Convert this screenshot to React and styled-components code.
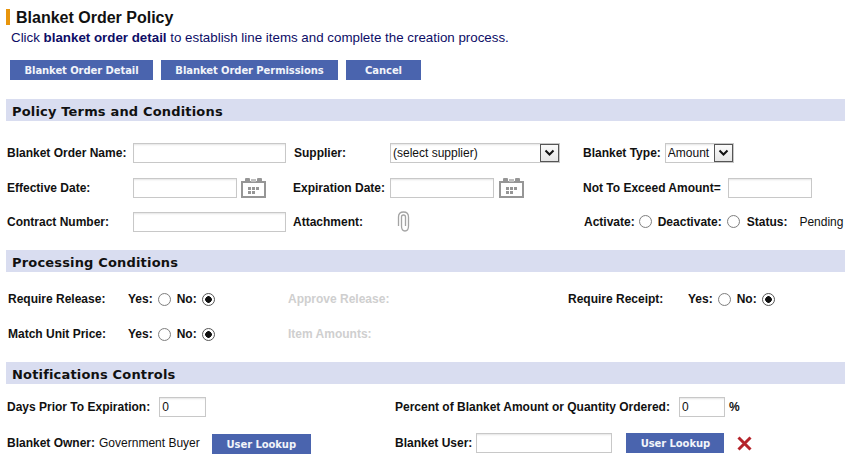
import React from "react";
import styled, { createGlobalStyle } from "styled-components";

const GlobalStyle = createGlobalStyle`
  html, body {
    margin: 0;
    padding: 0;
    background: #fff;
  }
  body {
    font-family: "Liberation Sans", Arial, sans-serif;
    font-size: 12px;
    color: #111;
  }
`;

const Page = styled.div`
  width: 856px;
  height: 472px;
  padding: 9px 11px 0 6px;
  box-sizing: border-box;
  overflow: hidden;
`;

const Title = styled.h1`
  margin: 0;
  height: 16px;
  border-left: 4px solid #e8950c;
  padding-left: 6px;
  font-size: 16px;
  line-height: 17px;
  font-weight: bold;
  color: #111;
`;

const Intro = styled.p`
  margin: 6px 0 0 5px;
  font-size: 13.33px;
  line-height: 14px;
  color: #0d0d66;
`;

const Toolbar = styled.div`
  display: flex;
  gap: 8px;
  margin: 15px 0 0 4px;
`;

const Button = styled.button`
  box-sizing: border-box;
  width: ${(p) => p.$w}px;
  height: 20px;
  margin-left: ${(p) => p.$left || 0}px;
  margin-top: ${(p) => p.$top || 0}px;
  padding: 1px 0 0;
  border: 0;
  background: #4a64ae;
  color: #f2f4fa;
  font-family: "DejaVu Sans", Verdana, sans-serif;
  font-size: 10px;
  font-weight: bold;
  letter-spacing: -0.08px;
  text-align: center;
`;

const SectionBar = styled.h2`
  margin: ${(p) => p.$top}px 0 0;
  height: 22px;
  background: #d9ddf0;
  padding-left: 6px;
  font-family: "DejaVu Sans", Verdana, sans-serif;
  font-size: 13px;
  font-weight: bold;
  line-height: 25px;
  letter-spacing: 0.17px;
  color: #111;
`;

const PolicyRow = styled.div`
  display: grid;
  grid-template-columns: 126px 160px 97px 193px 1fr;
  align-items: center;
  height: 20px;
  margin: ${(p) => p.$top}px 0 0 1px;
`;

const ProcessRow = styled.div`
  display: grid;
  grid-template-columns: 120px 160px 280px 120px 1fr;
  align-items: center;
  height: 16px;
  margin: ${(p) => p.$top}px 0 0 2px;
`;

const NoticeRow = styled.div`
  display: grid;
  grid-template-columns: 388px 1fr;
  align-items: center;
  height: 20px;
  margin: ${(p) => p.$top}px 0 0 1px;
`;

const Inline = styled.div`
  display: flex;
  align-items: center;
  margin-left: ${(p) => p.$left || 0}px;
`;

const Label = styled.label`
  margin-left: ${(p) => p.$left || 0}px;
  font-size: 12px;
  font-weight: bold;
  white-space: nowrap;
  color: ${(p) => (p.$disabled ? "#cfcfcf" : "#111")};
`;

const Plain = styled.span`
  margin-left: ${(p) => p.$left || 0}px;
  font-size: 12px;
  white-space: nowrap;
  color: #111;
`;

const Input = styled.input`
  box-sizing: border-box;
  width: ${(p) => p.$w}px;
  height: 20px;
  margin: 0 0 0 ${(p) => p.$left || 0}px;
  border: 1px solid #c8c8c8;
  box-shadow: inset 0 2px 2px -1px #e4e4e4;
  padding: 0 2px;
  font-family: "Liberation Sans", Arial, sans-serif;
  font-size: 12px;
  color: #111;
  outline: none;
`;

const SelectBox = styled.div`
  box-sizing: border-box;
  display: flex;
  width: ${(p) => p.$w}px;
  height: 20px;
  margin-left: ${(p) => p.$left || 0}px;
  border: 1px solid #c8c8c8;
  box-shadow: inset 0 2px 2px -1px #e4e4e4;
`;

const Select = styled.select`
  flex: 1;
  min-width: 0;
  appearance: none;
  border: 0;
  background: transparent;
  padding: 0 2px;
  font-family: "Liberation Sans", Arial, sans-serif;
  font-size: 12px;
  color: #111;
  outline: none;
`;

const Arrow = styled.span`
  box-sizing: border-box;
  flex: none;
  display: flex;
  align-items: center;
  justify-content: center;
  width: 19px;
  height: 18px;
  border: 1px solid #555;
  background: linear-gradient(#fafafa, #e6e6e6);
`;

const Radio = styled.input.attrs({ type: "radio" })`
  appearance: none;
  box-sizing: border-box;
  flex: none;
  width: 13px;
  height: 13px;
  margin: 0 0 0 ${(p) => p.$left || 0}px;
  border-radius: 50%;
  border: 1px solid #808080;
  background: radial-gradient(circle, #fff 55%, #eee 100%);

  &:checked {
    border-color: #555;
    background: radial-gradient(circle, #111 0, #111 3px, #fff 3.6px);
  }
`;

const Chevron = () => (
  <svg width="11" height="8" viewBox="0 0 11 8">
    <path d="M1.5 1.5 L5.5 5.5 L9.5 1.5" fill="none" stroke="#111" strokeWidth="2" />
  </svg>
);

const CalendarIcon = () => (
  <svg width="25" height="20" viewBox="0 0 25 20">
    <path d="M1 4 H24 V19 H1 Z" fill="#fff" stroke="#969696" strokeWidth="2" />
    <rect x="4" y="0" width="5" height="5" rx="1" fill="#969696" />
    <rect x="16" y="0" width="5" height="5" rx="1" fill="#969696" />
    <rect x="10" y="1" width="5" height="3" fill="#bdbdbd" />
    <rect x="7" y="9" width="3" height="3" fill="#969696" />
    <rect x="11" y="9" width="3" height="3" fill="#969696" />
    <rect x="15" y="9" width="3" height="3" fill="#969696" />
    <rect x="7" y="13" width="3" height="3" fill="#969696" />
    <rect x="11" y="13" width="3" height="3" fill="#969696" />
  </svg>
);

const ClipIcon = () => (
  <svg width="13" height="21" viewBox="0 0 13 21">
    <path
      d="M1.5 15 V6 Q1.5 1 6.5 1 Q11.5 1 11.5 6 V15 Q11.5 20 8 20 Q4.5 20 4.5 15 V6 Q4.5 4 6.5 4 Q8.5 4 8.5 6 V15"
      fill="none"
      stroke="#a4a4a4"
      strokeWidth="1.3"
    />
  </svg>
);

const CloseIcon = () => (
  <svg width="15" height="15" viewBox="0 0 15 15">
    <path
      d="M1.5 1.5 L13.5 13.5 M13.5 1.5 L1.5 13.5"
      stroke="#b5242b"
      strokeWidth="3"
      fill="none"
    />
  </svg>
);

const YesNo = ({ name }) => (
  <Inline>
    <Label>Yes:</Label>
    <Radio name={name} $left={5} />
    <Label $left={6}>No:</Label>
    <Radio name={name} $left={5} defaultChecked />
  </Inline>
);

export default function App() {
  return (
    <Page>
      <GlobalStyle />
      <Title>Blanket Order Policy</Title>
      <Intro>
        Click <b>blanket order detail</b> to establish line items and complete
        the creation process.
      </Intro>
      <Toolbar>
        <Button $w={143}>Blanket Order Detail</Button>
        <Button $w={177}>Blanket Order Permissions</Button>
        <Button $w={75}>Cancel</Button>
      </Toolbar>

      <SectionBar $top={19}>Policy Terms and Conditions</SectionBar>
      <PolicyRow $top={22}>
        <Label>Blanket Order Name:</Label>
        <Input $w={153} />
        <Label $left={1}>Supplier:</Label>
        <SelectBox $w={170}>
          <Select>
            <option>(select supplier)</option>
          </Select>
          <Arrow>
            <Chevron />
          </Arrow>
        </SelectBox>
        <Inline>
          <Label>Blanket Type:</Label>
          <SelectBox $w={69} $left={4}>
            <Select>
              <option>Amount</option>
            </Select>
            <Arrow>
              <Chevron />
            </Arrow>
          </SelectBox>
        </Inline>
      </PolicyRow>
      <PolicyRow $top={15}>
        <Label>Effective Date:</Label>
        <Inline>
          <Input $w={104} />
          <Inline $left={4}>
            <CalendarIcon />
          </Inline>
        </Inline>
        <Label>Expiration Date:</Label>
        <Inline>
          <Input $w={104} />
          <Inline $left={5}>
            <CalendarIcon />
          </Inline>
        </Inline>
        <Inline>
          <Label>Not To Exceed Amount=</Label>
          <Input $w={84} $left={7} />
        </Inline>
      </PolicyRow>
      <PolicyRow $top={13}>
        <Label>Contract Number:</Label>
        <Input $w={153} />
        <Label>Attachment:</Label>
        <Inline $left={7}>
          <ClipIcon />
        </Inline>
        <Inline>
          <Label $left={1}>Activate:</Label>
          <Radio name="active" $left={4} />
          <Label $left={6}>Deactivate:</Label>
          <Radio name="active" $left={5} />
          <Label $left={7}>Status:</Label>
          <Plain $left={12}>Pending</Plain>
        </Inline>
      </PolicyRow>

      <SectionBar $top={19}>Processing Conditions</SectionBar>
      <ProcessRow $top={19}>
        <Label>Require Release:</Label>
        <YesNo name="release" />
        <Label $disabled>Approve Release:</Label>
        <Label>Require Receipt:</Label>
        <YesNo name="receipt" />
      </ProcessRow>
      <ProcessRow $top={19}>
        <Label>Match Unit Price:</Label>
        <YesNo name="price" />
        <Label $disabled>Item Amounts:</Label>
      </ProcessRow>

      <SectionBar $top={20}>Notifications Controls</SectionBar>
      <NoticeRow $top={13}>
        <Inline>
          <Label>Days Prior To Expiration:</Label>
          <Input $w={47} $left={9} defaultValue="0" />
        </Inline>
        <Inline>
          <Label>Percent of Blanket Amount or Quantity Ordered:</Label>
          <Input $w={46} $left={9} defaultValue="0" />
          <Label $left={4}>%</Label>
        </Inline>
      </NoticeRow>
      <NoticeRow $top={15}>
        <Inline>
          <Label>Blanket Owner:</Label>
          <Plain $left={4}>Government Buyer</Plain>
          <Button $w={99} $left={12} $top={2}>
            User Lookup
          </Button>
        </Inline>
        <Inline>
          <Label>Blanket User:</Label>
          <Input $w={136} $left={4} />
          <Button $w={98} $left={14}>
            User Lookup
          </Button>
          <Inline $left={13}>
            <CloseIcon />
          </Inline>
        </Inline>
      </NoticeRow>
    </Page>
  );
}
